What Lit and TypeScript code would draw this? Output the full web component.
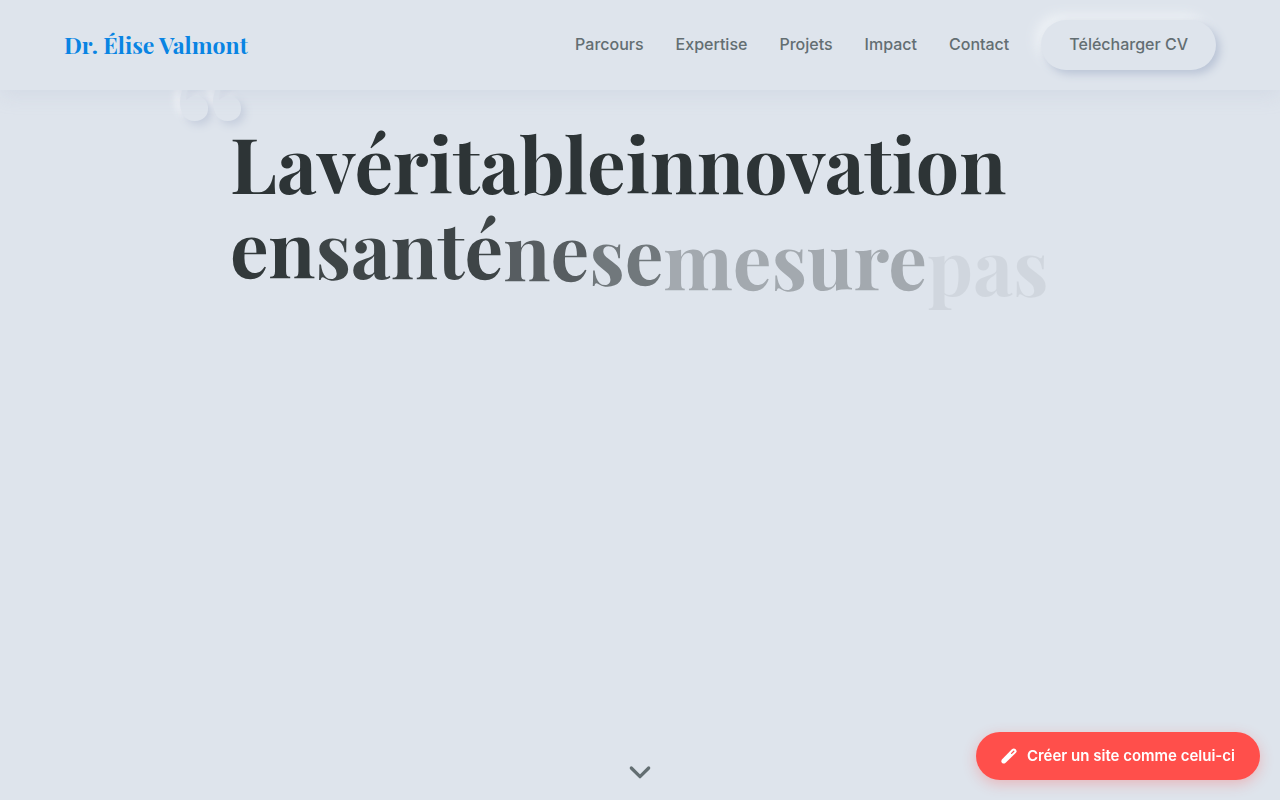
import { LitElement, html, css } from "lit";
import { customElement } from "lit/decorators.js";
import { styleMap } from "lit/directives/style-map.js";

interface Word {
  text: string;
  opacity: number;
  shift: number;
}

const LINKS = ["Parcours", "Expertise", "Projets", "Impact", "Contact"];

const WORDS: Word[] = [
  { text: "La", opacity: 1, shift: 0 },
  { text: "véritable", opacity: 1, shift: 0 },
  { text: "innovation", opacity: 1, shift: 0 },
  { text: "en", opacity: 0.97, shift: 0 },
  { text: "santé", opacity: 0.9, shift: 1 },
  { text: "ne", opacity: 0.76, shift: 3 },
  { text: "se", opacity: 0.61, shift: 7 },
  { text: "mesure", opacity: 0.33, shift: 12 },
  { text: "pas", opacity: 0.07, shift: 18 },
];

@customElement("app-root")
export class AppRoot extends LitElement {
  static styles = css`
    :host {
      display: block;
      min-height: 100vh;
      background: #dee4ec;
      color: #2d3436;
      font-family: Inter, "Liberation Sans", sans-serif;
      font-size: 16px;
    }
    .page {
      display: flex;
      flex-direction: column;
      min-height: 100vh;
    }
    .bar {
      position: relative;
      z-index: 2;
      display: flex;
      align-items: center;
      justify-content: space-between;
      padding: 20px 64px;
      background: #dee4ec;
      box-shadow: 0 4px 20px rgba(163, 177, 198, 0.2);
    }
    .logo {
      color: #0984e3;
      font-family: "Playfair Display", "Liberation Serif", serif;
      font-size: 23px;
      font-weight: 700;
      line-height: 32px;
      text-decoration: none;
    }
    .nav {
      display: flex;
      align-items: center;
      gap: 32px;
    }
    .link {
      padding-bottom: 2px;
      color: #636e72;
      font-weight: 500;
      line-height: 24px;
      text-decoration: none;
    }
    .cv {
      padding: 12px 28px 14px;
      border: 0;
      border-radius: 25px;
      background: #dee4ec;
      box-shadow: 4px 4px 8px #bac4d6, -6px -6px 12px #edf1f5;
      color: #636e72;
      font: inherit;
      font-weight: 500;
      line-height: 24px;
    }
    .hero {
      flex: 1;
      display: flex;
      flex-direction: column;
      align-items: center;
      justify-content: space-between;
      padding: 30px 64px 16px;
    }
    .quote {
      position: relative;
      width: 100%;
      max-width: 820px;
      margin: 0;
      font-family: "Playfair Display", "Liberation Serif", serif;
      font-weight: 700;
    }
    .mark {
      position: absolute;
      top: -23px;
      left: -57px;
      color: #dee4ec;
      font-size: 160px;
      line-height: 60px;
      text-shadow: 4px 4px 8px #c6cedd, -6px -4px 6px #eef1f5;
    }
    .words {
      position: relative;
      display: flex;
      flex-wrap: wrap;
      margin: 0;
      font-size: 6vw;
      line-height: 1.1;
    }
    .down {
      padding: 0;
      border: 0;
      background: none;
      color: #636e72;
      line-height: 0;
    }
    .create {
      position: fixed;
      right: 20px;
      bottom: 20px;
      display: flex;
      align-items: center;
      gap: 10px;
      padding: 12px 25px;
      border-radius: 24px;
      background: #ff4f4b;
      box-shadow: 0 4px 14px rgba(255, 79, 75, 0.3);
      color: #fff;
      font-size: 15px;
      font-weight: 600;
      line-height: 24px;
      text-decoration: none;
    }
  `;

  render() {
    return html`
      <div class="page">
        <header class="bar">
          <a class="logo" href="#accueil">Dr. Élise Valmont</a>
          <nav class="nav">
            ${LINKS.map(
              (l) => html`<a class="link" href="#${l.toLowerCase()}">${l}</a>`
            )}
            <button class="cv" type="button">Télécharger CV</button>
          </nav>
        </header>
        <main class="hero">
          <blockquote class="quote">
            <span class="mark" aria-hidden="true">“</span>
            <p class="words">
              ${WORDS.map(
                (w) => html`<span
                  style=${styleMap({
                    opacity: String(w.opacity),
                    transform: `translateY(${w.shift}px)`,
                  })}
                  >${w.text}</span
                >`
              )}
            </p>
          </blockquote>
          <button class="down" type="button" aria-label="Défiler vers le bas">
            <svg width="24" height="24" viewBox="0 0 24 24" fill="none">
              <path
                d="M3.300 8 12 16.700 20.700 8"
                stroke="currentColor"
                stroke-width="3.200"
                stroke-linecap="round"
                stroke-linejoin="round"
              />
            </svg>
          </button>
        </main>
        <a class="create" href="#creer">
          <svg width="16" height="16" viewBox="0 0 16 16" aria-hidden="true">
            <path
              d="M.9 11.600 10.900 1.300Q12.800-.4 14.700 1.300 16.400 3.200 14.700 5.100L4.400 15.100Q2.600 16.200 1.100 14.900-.2 13.400.9 11.600Z"
              fill="#fff"
            />
            <path
              d="m10.600 5.400 2.200-2.200"
              stroke="#ff4f4b"
              stroke-width="1.300"
              stroke-linecap="round"
            />
          </svg>
          Créer un site comme celui-ci
        </a>
      </div>
    `;
  }
}
